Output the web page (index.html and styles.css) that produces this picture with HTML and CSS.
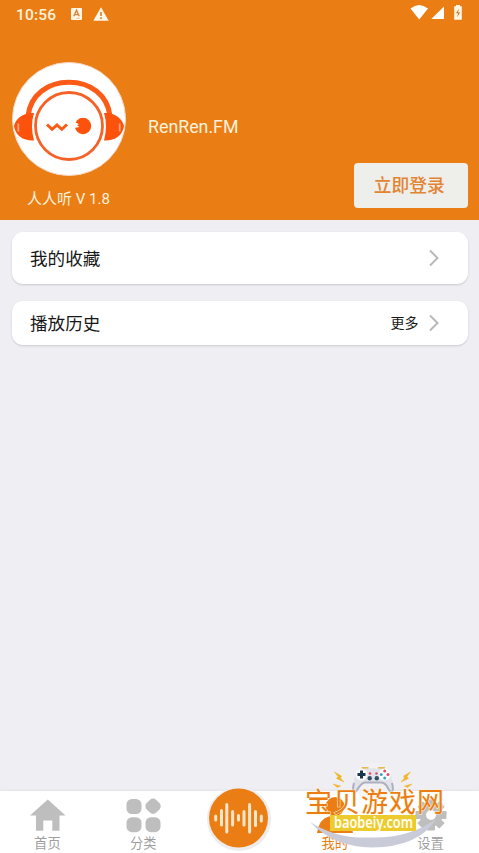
FILE: index.html
```html
<!DOCTYPE html>
<html lang="zh-CN">
<head>
<meta charset="utf-8">
<title>RenRen.FM</title>
<link rel="stylesheet" href="styles.css">
</head>
<body>
<div class="app">
  <header class="hero">
    <div class="status">
      <span class="time">10:56</span>
      <svg class="status-app" width="11" height="12" viewBox="0 0 11 12"><rect width="11" height="12" rx="1" fill="#fff6e4"/><path d="M2.8 8.3 5.5 2.3 8.2 8.3M3.8 6.6H7.2" fill="none" stroke="#d98539" stroke-width="1.4"/><path d="M5 10.3h4" stroke="#e8b27c" stroke-width=".7"/></svg>
      <svg class="status-warn" width="16" height="14" viewBox="0 0 16 14"><path d="M8 .3 15.7 13.7H.3Z" fill="#fff6e4"/><path d="M8 5v4M8 10.3v1.7" stroke="#cf7a2a" stroke-width="1.5"/></svg>
      <svg class="status-right" width="54" height="16" viewBox="0 0 54 16"><path d="M.5 3.6Q9-3.5 18 3.6L9.2 14.6Z" fill="#fff"/><path d="M34 1.5V14H21.3Z" fill="#fff"/><path d="M44.2 1.3H46V0h4v1.3h1.8V14.7h-7.6Z" fill="#fff6e4"/><path d="M49 3.7 46 8.3h2.2L47 12.2 50.2 7.4H48Z" fill="#c96f1c"/></svg>
    </div>
    <div class="profile">
      <div class="identity">
        <svg class="avatar" width="114" height="114" viewBox="11.5 62 114 114">
          <circle cx="68.500" cy="119" r="56.500" fill="#fff" stroke="#f6d5c4"/>
          <path d="M27.500 116C30 95 47 82.300 68.500 82.300S107 95 109.500 116" fill="none" stroke="#fb5a17" stroke-width="5"/>
          <path d="M33.500 113C24 112 15 118 13.500 126C15 136 23 141 33.500 140.500Q29.500 126 33.500 113ZM103.500 113C113 112 122 118 123.500 126C122 136 114 141 103.500 140.500Q107.500 126 103.500 113Z" fill="#fc520c"/>
          <path d="M17.800 123.500v8M119.200 123.500v8" stroke="#ffa77c" stroke-width="1.800"/>
          <circle cx="68.500" cy="126" r="33.500" fill="#fff" stroke="#f46228" stroke-width="2.800"/>
          <path d="M46.500 124.500 51.500 129.300 56.500 125 61.300 129.300 66.500 124.500" fill="none" stroke="#fb5a17" stroke-width="3"/>
          <circle cx="82.500" cy="126" r="8.200" fill="#fc520c"/>
          <path d="M73.500 122 78.500 124 76.500 125.200 79 127 73.500 128Z" fill="#fff"/>
        </svg>
        <div class="version">人人听 V 1.8</div>
      </div>
      <div class="name">RenRen.FM</div>
      <button class="login">立即登录</button>
    </div>
  </header>
  <main class="list">
    <section class="card card-fav"><span>我的收藏</span><svg class="chevron" width="12" height="18" viewBox="0 0 12 18"><path d="M2 1.500 9.500 9 2 16.500"/></svg></section>
    <section class="card card-history"><span>播放历史</span><span class="more">更多</span><svg class="chevron" width="12" height="18" viewBox="0 0 12 18"><path d="M2 1.500 9.500 9 2 16.500"/></svg></section>
  </main>
  <nav class="tabs">
    <div class="tab"><svg width="36" height="36" viewBox="30 797 36 36"><path d="M47.800 799.500 65.500 815.500H59.500V830.800H52.300V820.500H43.300V830.800H36V815.500H30Z"/></svg><span>首页</span></div>
    <div class="tab"><svg width="36" height="36" viewBox="125.700 797 36 36"><rect x="126.200" y="799" width="15" height="15" rx="5.500"/><rect x="146" y="799.500" width="13.500" height="13.500" rx="4.500" transform="rotate(45 152.750 806.250)"/><rect x="126.200" y="817.200" width="15" height="15" rx="5.500"/><rect x="145.200" y="817.200" width="15" height="15" rx="5.500"/></svg><span>分类</span></div>
    <div class="tab tab-play"><svg class="play" width="66" height="66" viewBox="0 0 66 66"><circle cx="33" cy="33" r="32" fill="#eeecec"/><circle cx="32.500" cy="32" r="29.500" fill="#ea7e14"/><g stroke="#ffe5c8" stroke-width="3" stroke-linecap="round"><path d="M9.700 30v4M15.500 24.500v14.500M20.800 18.500v27.500M26.600 25.500v13.500M32.500 29.500v4.500M38 25.500v13.500M43.600 18.500v27.500M49.500 25.500v14M55.300 30v5"/></g></svg></div>
    <div class="tab tab-active"><svg width="36" height="36" viewBox="317 797 36 36"><circle cx="335" cy="806.500" r="9.500"/><path d="M317 833Q319 819 328.500 816.500H341.500Q351 819 353 833Z"/></svg><span>我的</span></div>
    <div class="tab"><svg width="36" height="36" viewBox="-18 -18 36 36"><g><rect x="-4" y="-15.500" width="8" height="31" rx="1"/><rect x="-4" y="-15.500" width="8" height="31" rx="1" transform="rotate(45)"/><rect x="-4" y="-15.500" width="8" height="31" rx="1" transform="rotate(90)"/><rect x="-4" y="-15.500" width="8" height="31" rx="1" transform="rotate(135)"/></g><circle r="11.500"/><circle r="5" fill="#fff"/></svg><span>设置</span></div>
  </nav>
  <svg class="watermark" width="154" height="93" viewBox="300 760 154 93">
    <circle cx="373" cy="782" r="19" fill="#f2f2f4" opacity=".7"/>
    <path d="M310 822Q337 839 369 837.500Q408 839 436 819Q419 847 372 847.500Q334 847 310 822Z" fill="#c9ccd8"/>
    <path d="M361.500 768H368.500M378 768H385" stroke="#e8b94d" stroke-width="2"/>
    <path d="M360 769Q373 767.500 386 769Q391 771 392 780C394 785 395 793 391.500 793C388 793 386 786 381.500 782.500H364.500C360 786 358 793 354.500 793C351 793 352 785 354 780Q355 771 360 769Z" fill="#e2e3ea"/>
    <path d="M354 783C352 791 354 794 357 790C360 785 362 782.500 365 782.500H381C384 782.500 387 785 389 790C392 794 394 791 392 783" fill="none" stroke="#aeb0bf" stroke-width="2"/>
    <circle cx="361.500" cy="774.500" r="6" fill="#f8f8fa"/><path d="M361.500 770.500v8M357.500 774.500h8" stroke="#17364b" stroke-width="3"/>
    <circle cx="384.700" cy="774.500" r="6" fill="#fff"/><g fill="#e34c68"><circle cx="384.700" cy="771" r="1.500"/><circle cx="388" cy="774.500" r="1.500"/><circle cx="370" cy="773.500" r="1.300"/><circle cx="376.500" cy="773.500" r="1.300"/></g><g fill="#35a5bd"><circle cx="381.200" cy="774.500" r="1.500"/><circle cx="384.700" cy="778" r="1.500"/></g><g fill="#315063"><circle cx="369.700" cy="778.300" r="2.200"/><circle cx="376.800" cy="778.300" r="2.200"/></g>
    <path d="M334.500 772 341.500 776 340.500 778 344 782 336.500 778.500 338 776.500ZM410.500 772 403.500 776 404.500 778 401 782 408.500 778.500 407 776.500ZM333 784 340.500 786 337.500 787.500ZM412 784 404.500 786 407.500 787.500Z" fill="#efb52f" stroke="#efb52f" stroke-width=".5"/>
    <text class="wm-title" x="305" y="811.500" textLength="139">宝贝游戏网</text>
    <rect x="330" y="815" width="86" height="16" fill="#eccb2e"/>
    <text class="wm-site" x="334" y="828" textLength="79" lengthAdjust="spacingAndGlyphs">baobeiy.com</text>
  </svg>
</div>
</body>
</html>
```
FILE: styles.css
```css
* { box-sizing: border-box; }
body { margin: 0; background: #efeef3; font-family: Roboto, "Noto Sans CJK SC", sans-serif; }
.app { position: relative; width: 479px; height: 853px; display: flex; flex-direction: column; overflow: hidden; }
.hero { height: 220px; background: #ea7e14; color: #fff2dd; flex: none; }
.status { height: 28px; display: flex; align-items: center; padding: 0 16px; }
.time { font-size: 15.500px; font-weight: 500; letter-spacing: .2px; width: 55px; line-height: 28px; padding-top: 1px; }
.status-warn { margin-left: 11px; }
.status-right { margin-left: auto; margin-right: -1px; margin-bottom: 3px; }
.profile { display: flex; padding: 34px 11.500px 0; }
.identity { width: 114px; text-align: center; }
.avatar { display: block; }
.version { font-size: 15px; line-height: 22px; margin-top: 12px; white-space: nowrap; }
.name { margin-left: 22.500px; font-size: 17.800px; line-height: 24px; margin-top: 53px; }
.login { margin: 101px 0 0 auto; width: 113.500px; height: 45px; border: 0; border-radius: 4px; padding: 1px 3px 0 0; background: #eeeeeb; color: #e28432; font: 500 17.800px/44px Roboto, "Noto Sans CJK SC", sans-serif; }
.list { flex: 1; padding: 12px 11.500px 0; display: flex; flex-direction: column; gap: 17px; }
.card { display: flex; align-items: center; padding: 0 28px 0 18.500px; background: #fff; border-radius: 11px; box-shadow: 0 1px 2px #c9c9d0; font-size: 17.600px; color: #181818; }
.card-fav { height: 52px; }
.card-fav span { margin-top: -2px; }
.card-history { height: 43.500px; }
.chevron { margin-left: auto; fill: none; stroke: #b9b9b9; stroke-width: 2; }
.more { margin-left: auto; font-size: 14px; margin-top: -1px; }
.more + .chevron { margin-left: 9px; }
.tabs { height: 62px; flex: none; display: grid; grid-template-columns: repeat(5, 1fr); background: #fff; box-shadow: 0 -1px 2px #e4e3e8; }
.tab { display: flex; flex-direction: column; align-items: center; padding-top: 6px; color: #9f9f9f; fill: #bebebe; font-size: 13.300px; line-height: 20px; }
.tab svg { flex: none; }
.tab span { margin-top: 1px; margin-right: 1px; }
.tab-active { color: #ea7e14; fill: #ea7e14; }
.tab-play { padding: 0; }
.play { margin-top: -5px; }
.watermark { position: absolute; left: 300px; top: 760px; }
.wm-title { font: 400 27px "Noto Sans CJK SC", sans-serif; fill: #ea7e14; stroke: #fff5dd; stroke-width: 1px; paint-order: stroke; }
.wm-site { font: 600 16px "Noto Sans", sans-serif; fill: #fffdf0; }
```
